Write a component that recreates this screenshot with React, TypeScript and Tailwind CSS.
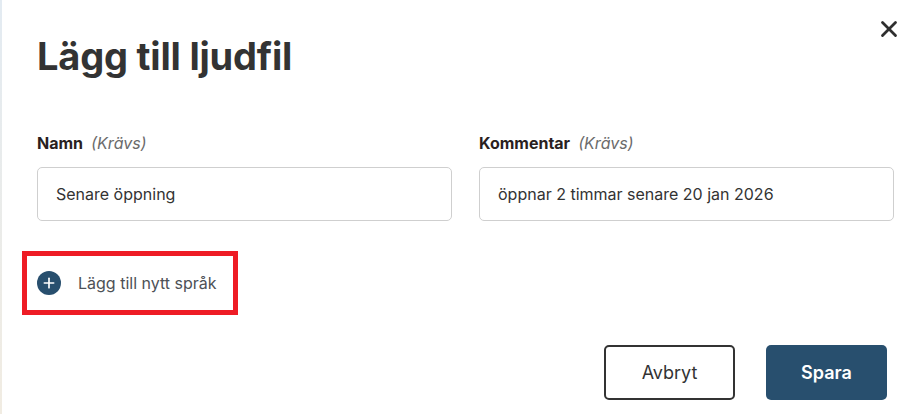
import { Plus, X } from "lucide-react";

const font = { fontFamily: "Inter, 'Noto Sans', sans-serif" };

function Field({ label, value }: { label: string; value: string }) {
  return (
    <div className="flex flex-col">
      <label className="flex items-baseline gap-2 text-[16px] leading-5">
        <span className="font-bold text-[#2a1f1f]">{label}</span>
        <span className="italic text-[#6b6b6b]">(Krävs)</span>
      </label>
      <div className="mt-[14px] flex h-[54px] items-center rounded-[5px] border border-[#cfcfcf] px-[18px] text-[16px] text-[#333]">
        {value}
      </div>
    </div>
  );
}

export default function App() {
  return (
    <div
      className="relative h-[414px] w-[906px] overflow-hidden bg-white"
      style={font}
    >
      <div className="absolute inset-y-0 left-0 w-[2px] bg-gradient-to-b from-[#e3ebf2] to-[#f1ece2]" />
      <button className="absolute right-[4px] top-[16px] text-[#2f2f2f]">
        <X size={26} strokeWidth={2.6} />
      </button>

      <div className="flex flex-col pl-[37px] pr-[12px] pt-[30px]">
        <h1 className="text-[38px] font-bold leading-[52px] tracking-[-0.2px] text-[#333]">
          Lägg till ljudfil
        </h1>

        <div className="mt-[51px] grid grid-cols-2 gap-[27px]">
          <Field label="Namn" value="Senare öppning" />
          <Field label="Kommentar" value="öppnar 2 timmar senare 20 jan 2026" />
        </div>

        <div className="-ml-[15px] mt-[30px] w-[216px] border-[5px] border-[#ee1c25] py-[15px] pl-[10px]">
          <button className="flex items-center gap-[17px] text-[16px] leading-6 text-[#4d5156]">
            <span className="flex h-[24px] w-[24px] items-center justify-center rounded-full bg-[#284f6e] text-white">
              <Plus size={16} strokeWidth={2.5} />
            </span>
            Lägg till nytt språk
          </button>
        </div>

        <div className="mt-[30px] flex justify-end gap-[31px] pr-[7px]">
          <button className="h-[55px] w-[131px] rounded-[5px] border-2 border-[#333] text-[18px] text-[#333]">
            Avbryt
          </button>
          <button className="h-[55px] w-[121px] rounded-[5px] bg-[#284f6e] text-[18px] font-semibold text-white">
            Spara
          </button>
        </div>
      </div>
    </div>
  );
}
